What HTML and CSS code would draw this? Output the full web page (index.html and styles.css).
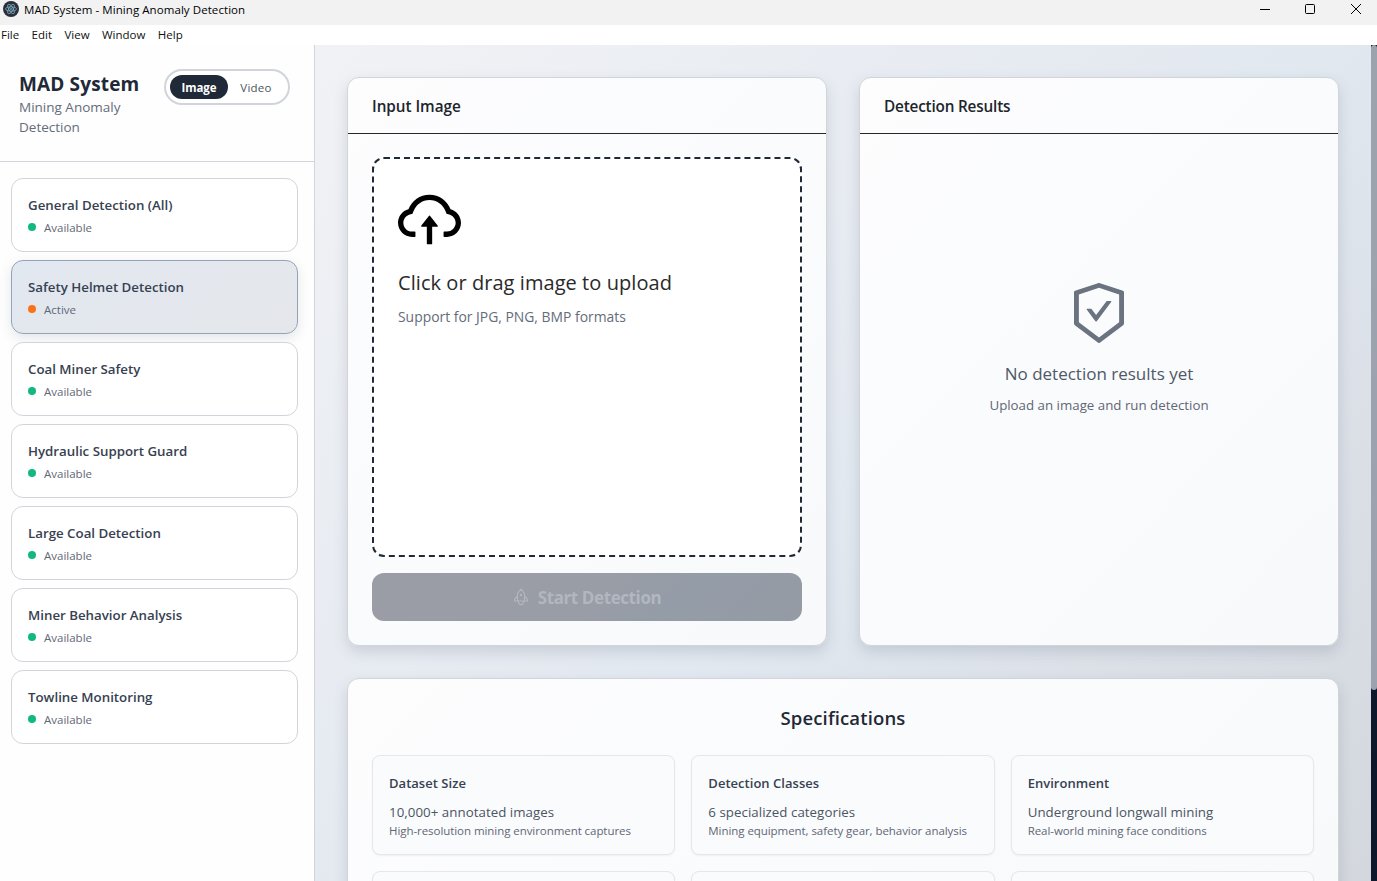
FILE: index.html
```html
<!DOCTYPE html>
<html lang="en">
<head>
<meta charset="utf-8">
<title>MAD System - Mining Anomaly Detection</title>
<link rel="stylesheet" href="styles.css">
</head>
<body>
<div class="titlebar">
  <svg class="app-icon" viewBox="0 0 16 16"><circle cx="8" cy="8" r="8" fill="#2b2e3a"/><g fill="none" stroke="#9feaf9" stroke-width=".7" opacity=".75"><ellipse cx="8" cy="8" rx="5.4" ry="2.1"/><ellipse cx="8" cy="8" rx="5.4" ry="2.1" transform="rotate(60 8 8)"/><ellipse cx="8" cy="8" rx="5.4" ry="2.1" transform="rotate(120 8 8)"/></g><circle cx="8" cy="8" r=".8" fill="#9feaf9"/></svg>
  <span class="window-title">MAD System - Mining Anomaly Detection</span>
  <div class="window-controls">
    <svg viewBox="0 0 12 12"><path d="M1 6.500h10"/></svg>
    <svg viewBox="0 0 12 12"><rect x="1.500" y="1.500" width="9" height="9" rx="1"/></svg>
    <svg viewBox="0 0 12 12"><path d="M1 1l10 10M11 1L1 11"/></svg>
  </div>
</div>
<nav class="menubar"><span>File</span><span>Edit</span><span>View</span><span>Window</span><span>Help</span></nav>
<div class="app">
  <aside class="sidebar">
    <header class="brand">
      <div class="brand-text">
        <h1>MAD System</h1>
        <p>Mining Anomaly<br>Detection</p>
      </div>
      <div class="mode"><span class="mode-on">Image</span><span class="mode-off">Video</span></div>
    </header>
    <ul class="models">
      <li><h2>General Detection (All)</h2><p><i></i><span>Available</span></p></li>
      <li class="active"><h2>Safety Helmet Detection</h2><p><i></i><span>Active</span></p></li>
      <li><h2>Coal Miner Safety</h2><p><i></i><span>Available</span></p></li>
      <li><h2>Hydraulic Support Guard</h2><p><i></i><span>Available</span></p></li>
      <li><h2>Large Coal Detection</h2><p><i></i><span>Available</span></p></li>
      <li><h2>Miner Behavior Analysis</h2><p><i></i><span>Available</span></p></li>
      <li><h2>Towline Monitoring</h2><p><i></i><span>Available</span></p></li>
    </ul>
  </aside>
  <main class="main">
    <div class="panels">
      <section class="card">
        <h2 class="card-title">Input Image</h2>
        <div class="card-body">
          <div class="dropzone">
            <svg class="cloud" viewBox="64 -7 896 1024"><path d="M518.300 459a8 8 0 00-12.600 0l-112 141.700a7.980 7.980 0 006.300 12.900h73.900V856c0 4.400 3.600 8 8 8h60c4.400 0 8-3.600 8-8V613.700H624c6.700 0 10.400-7.700 6.300-12.900L518.300 459z"/><path d="M811.400 366.700C765.600 245.900 648.900 160 512.200 160S258.800 245.800 213 366.600C127.300 389.100 64 467.200 64 560c0 110.500 89.500 200 199.900 200H304c4.400 0 8-3.600 8-8v-60c0-4.400-3.600-8-8-8h-40.100c-33.700 0-65.400-13.400-89-37.700-23.500-24.200-36-56.800-34.900-90.600.9-26.400 9.900-51.200 26.200-72.100 16.700-21.300 40.100-36.800 66.100-43.700l37.900-9.900 13.900-36.600c8.600-22.800 20.600-44.100 35.700-63.400a245.600 245.600 0 0152.400-49.900c41.100-28.900 89.500-44.200 140-44.200s98.900 15.300 140 44.200c19.900 14 37.500 30.800 52.400 49.900 15.100 19.300 27.100 40.700 35.700 63.400l13.800 36.500 37.800 10C846.100 454.500 884 503.800 884 560c0 33.100-12.900 64.300-36.300 87.700a123.070 123.070 0 01-87.600 36.300H720c-4.400 0-8 3.600-8 8v60c0 4.400 3.600 8 8 8h40.100C870.500 760 960 670.500 960 560c0-92.700-63.100-170.700-148.600-193.300z"/></svg>
            <p class="drop-title">Click or drag image to upload</p>
            <p class="drop-hint">Support for JPG, PNG, BMP formats</p>
          </div>
          <div class="start"><svg viewBox="0 0 16 18"><path d="M4.500 13V5.500L8 1.200l3.500 4.300V13zM4.500 8.200C2.600 9.200 1.500 11 1.500 13h3M11.500 8.200c1.900 1 3 2.800 3 4.800h-3M5.300 13c0 2 1 3.600 2.700 3.600s2.700-1.600 2.700-3.600"/><circle cx="8" cy="7" r=".7"/></svg><span>Start Detection</span></div>
        </div>
      </section>
      <section class="card">
        <h2 class="card-title results-title">Detection Results</h2>
        <div class="empty">
          <svg class="shield" viewBox="142 52 740 920" preserveAspectRatio="none"><path d="M866.900 169.900L527.100 54.100C523 52.700 517.500 52 512 52s-11 .7-15.100 2.100L157.100 169.900c-8.300 2.800-15.100 12.400-15.100 21.200v482.400c0 8.800 5.700 20.400 12.600 25.900L499.300 968c3.500 2.700 8 4.100 12.600 4.100s9.200-1.400 12.600-4.100l344.700-268.600c6.900-5.400 12.600-17 12.600-25.900V191.100c.2-8.800-6.600-18.300-14.900-21.200zM810 654.300L512 886.500 214 654.300V226.700l298-101.600 298 101.600v427.600zm-405.800-201c-3-4.100-7.800-6.600-13-6.600H336c-6.500 0-10.300 7.400-6.500 12.700l126.400 174a16.100 16.100 0 0026 0l212.600-292.700c3.800-5.300 0-12.700-6.500-12.700h-55.200c-5.100 0-10 2.500-13 6.600L468.900 542.400l-64.700-89.100z"/></svg>
          <p class="empty-title">No detection results yet</p>
          <p class="empty-hint">Upload an image and run detection</p>
        </div>
      </section>
    </div>
    <section class="card specs">
      <h2 class="specs-title">Specifications</h2>
      <div class="spec-grid">
        <div class="spec"><h3>Dataset Size</h3><p>10,000+ annotated images</p><small>High-resolution mining environment captures</small></div>
        <div class="spec"><h3>Detection Classes</h3><p>6 specialized categories</p><small>Mining equipment, safety gear, behavior analysis</small></div>
        <div class="spec"><h3>Environment</h3><p>Underground longwall mining</p><small>Real-world mining face conditions</small></div>
        <div class="spec"></div><div class="spec"></div><div class="spec"></div>
      </div>
    </section>
  </main>
  <div class="scrollbar"><div class="thumb"></div></div>
</div>
</body>
</html>
```
FILE: styles.css
```css
* { box-sizing: border-box; margin: 0; padding: 0; }
body { width: 1377px; height: 881px; overflow: hidden; font-family: "Open Sans", "Noto Sans", sans-serif; color: #1f2937; background: #fff; display: flex; flex-direction: column; }
h1, h2, h3, p, small, span { white-space: nowrap; }
.titlebar { height: 25px; flex: none; background: #f2f2f2; display: flex; align-items: flex-start; padding: 1px 15px 0 3px; }
.app-icon { width: 16px; height: 16px; margin-right: 5px; }
.window-title { font-size: 11.5px; line-height: 17px; letter-spacing: .07px; color: #000; }
.window-controls { margin-left: auto; display: flex; gap: 33px; padding-top: 2px; }
.window-controls svg { width: 12px; height: 12px; fill: none; stroke: #000; stroke-width: 1; }
.window-controls svg:nth-child(2) { margin-right: 1px; }
.menubar { height: 20px; flex: none; display: flex; gap: 12.4px; padding-left: 1px; font-size: 11.5px; line-height: 20px; color: #111; }
.app { flex: 1; min-height: 0; display: flex; }
.sidebar { width: 315px; flex: none; border-right: 1px solid #d1d5db; background: #fefefe; }
.brand { height: 117px; border-bottom: 1px solid #d1d5db; padding: 24px 24px 0 19px; display: flex; justify-content: space-between; }
.brand h1 { font-size: 19px; line-height: 28px; padding-top: 1px; height: 28px; letter-spacing: .15px; font-weight: 700; }
.brand p { font-size: 13.5px; line-height: 20px; color: #646c7a; }
.mode { width: 126px; height: 36px; border: 2px solid #d1d5db; border-radius: 18px; background: #fff; padding: 4px; display: flex; line-height: 25px; font-size: 11.5px; text-align: center; }
.mode-on { width: 58px; height: 24px; border-radius: 12px; background: #1f2937; color: #fff; font-weight: 700; letter-spacing: -.1px; }
.mode-off { width: 56px; color: #4b5563; font-weight: 500; letter-spacing: .25px; }
.models { list-style: none; padding: 16px 16px 0 11px; display: flex; flex-direction: column; gap: 8px; }
.models li { height: 74px; border: 1px solid #d1d5db; border-radius: 12px; padding: 16px; background: #fff; }
.models li.active { background: linear-gradient(135deg, #e2e8f0, #e5e7eb); border-color: #94a3b8; box-shadow: 0 4px 12px rgba(71, 85, 105, .15); }
.models h2 { font-size: 13.3px; line-height: 20px; font-weight: 600; letter-spacing: -.01px; color: #374151; }
.models p { display: flex; align-items: center; gap: 8px; font-size: 11.5px; line-height: 16px; margin-top: 4px; color: #5f6775; }
.models p span { padding-top: 1px; margin-bottom: -1px; }
.models i { width: 8px; height: 8px; border-radius: 50%; background: #10b981; }
.models .active i { background: #f97316; }
.main { flex: 1; min-width: 0; padding: 32px; overflow: hidden; background: linear-gradient(135deg, #f1f2f5 0%, #e2e8f0 50%, #d1d5db 100%) 0 0 / 100% 960px; }
.panels { display: flex; gap: 32px; height: 569px; }
.card { border: 1px solid #d1d5db; border-radius: 12px; background: linear-gradient(135deg, #fdfdfe, #fafbfd 50%, #f8f9fb); box-shadow: 0 6px 14px rgba(71, 85, 105, .18); }
.panels .card { flex: 1; display: flex; flex-direction: column; }
.card-title { height: 56px; padding: 16px 24px 0; border-bottom: 1px solid #26282c; font-size: 15.3px; line-height: 25px; font-weight: 600; letter-spacing: -.03px; color: #20252b; }
.results-title { letter-spacing: -.18px; }
.card-body { padding: 23px 24px 24px; }
.dropzone { height: 400px; border: 2px dashed #1f2937; border-radius: 12px; background: #fff; padding: 24px; }
.cloud { display: block; width: 63px; height: 72px; }
.drop-title { font-size: 20px; line-height: 32px; margin-top: 12px; font-weight: 400; letter-spacing: .06px; color: #2a2a2a; }
.drop-hint { font-size: 13.9px; line-height: 20px; margin-top: 8px; color: #646c7a; }
.start { height: 48px; margin-top: 16px; border-radius: 12px; background: linear-gradient(135deg, #9b9da6 0%, #999da6 50%, #949ca7 70%, #959ba5 100%); display: flex; align-items: center; justify-content: center; gap: 9px; font-size: 17px; letter-spacing: -.4px; font-weight: 700; color: #b2b7bf; }
.start svg { width: 16px; height: 18px; fill: none; stroke: #b2b7bf; stroke-width: 1.1; }
.empty { flex: 1; display: flex; flex-direction: column; align-items: center; padding-top: 149px; }
.shield { width: 50px; height: 60px; fill: #6b7280; }
.empty-title { font-size: 17px; line-height: 28px; margin-top: 17px; color: #4f5866; }
.empty-hint { font-size: 13.3px; line-height: 20px; margin-top: 7px; color: #5f6775; }
.specs { height: 320px; margin-top: 32px; padding: 24px; }
.specs-title { text-align: center; font-size: 18.5px; line-height: 28px; height: 28px; padding-top: 1px; font-weight: 600; letter-spacing: .14px; }
.spec-grid { display: grid; grid-template-columns: repeat(3, 1fr); gap: 16px; margin-top: 24px; }
.spec { height: 100px; border: 1px solid #e5e7eb; border-radius: 8px; background: #fafbfd; padding: 16px; box-shadow: 0 1px 2px rgba(0, 0, 0, .05); }
.spec h3 { font-size: 13px; line-height: 22px; font-weight: 600; letter-spacing: .03px; color: #374151; }
.spec p { font-size: 13.3px; line-height: 20px; margin-top: 8px; letter-spacing: .04px; color: #4b5563; }
.spec small { display: block; font-size: 11.5px; line-height: 18px; letter-spacing: -.06px; color: #5f6775; }
.scrollbar { width: 6px; flex: none; background: #0f172a; }
.thumb { height: 645px; border-radius: 3px; background: #9ca3af; }
```
